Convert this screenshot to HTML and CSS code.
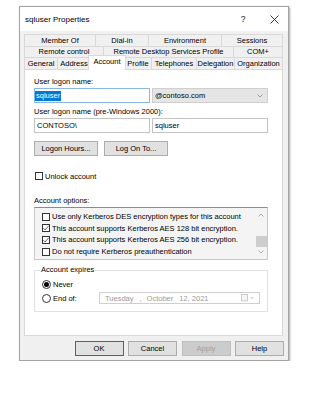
FILE: index.html
```html
<!DOCTYPE html>
<html>
<head>
<meta charset="utf-8">
<link rel="stylesheet" href="styles.css">
</head>
<body>
<div class="window">
  <div class="titlebar">
    <span class="title">sqluser Properties</span>
    <span class="help">?</span>
    <span class="close"><svg width="9" height="9" viewBox="0 0 9 9"><path d="M0.5 0.5L8.5 8.5M8.5 0.5L0.5 8.5" stroke="#222" stroke-width="0.9" fill="none"/></svg></span>
  </div>
  <div class="tabs">
    <div class="tabrow r1">
      <div class="tab">Member Of</div>
      <div class="tab">Dial-in</div>
      <div class="tab">Environment</div>
      <div class="tab last">Sessions</div>
    </div>
    <div class="tabrow r2">
      <div class="tab">Remote control</div>
      <div class="tab">Remote Desktop Services Profile</div>
      <div class="tab last">COM+</div>
    </div>
    <div class="tabrow r3">
      <div class="tab">General</div>
      <div class="tab">Address</div>
      <div class="tab sel">Account</div>
      <div class="tab">Profile</div>
      <div class="tab">Telephones</div>
      <div class="tab">Delegation</div>
      <div class="tab last">Organization</div>
    </div>
  </div>
  <div class="page">
    <div class="label l1">User logon name:</div>
    <div class="fieldrow r-first">
      <div class="input focus"><span class="selected">sqluser</span></div>
      <div class="combo"><span>@contoso.com</span><svg width="6" height="4" viewBox="0 0 6 4"><path d="M0.5 0.5L3 3L5.5 0.5" stroke="#8a8a8a" stroke-width="0.8" fill="none"/></svg></div>
    </div>
    <div class="label l2">User logon name (pre-Windows 2000):</div>
    <div class="fieldrow r-second">
      <div class="input">CONTOSO\</div>
      <div class="input">sqluser</div>
    </div>
    <div class="btnrow">
      <div class="btn wide">Logon Hours...</div>
      <div class="btn wide">Log On To...</div>
    </div>
    <div class="check unlock"><span class="box"></span><span>Unlock account</span></div>
    <div class="label l3">Account options:</div>
    <div class="listbox">
      <div class="items">
        <div class="check item"><span class="box"></span><span>Use only Kerberos DES encryption types for this account</span></div>
        <div class="check item"><span class="box"><svg width="8" height="8" viewBox="0 0 8 8"><path d="M1.3 4.2L3.1 6L6.8 1.6" stroke="#444" stroke-width="0.8" fill="none"/></svg></span><span>This account supports Kerberos AES 128 bit encryption.</span></div>
        <div class="check item"><span class="box"><svg width="8" height="8" viewBox="0 0 8 8"><path d="M1.3 4.2L3.1 6L6.8 1.6" stroke="#444" stroke-width="0.8" fill="none"/></svg></span><span>This account supports Kerberos AES 256 bit encryption.</span></div>
        <div class="check item"><span class="box"></span><span>Do not require Kerberos preauthentication</span></div>
      </div>
      <div class="scrollbar">
        <svg class="arrow" width="6" height="4" viewBox="0 0 6 4"><path d="M0.5 3.5L3 1L5.5 3.5" stroke="#9a9a9a" stroke-width="0.8" fill="none"/></svg>
        <div class="thumb"></div>
        <svg class="arrow" width="6" height="4" viewBox="0 0 6 4"><path d="M0.5 0.5L3 3L5.5 0.5" stroke="#9a9a9a" stroke-width="0.8" fill="none"/></svg>
      </div>
    </div>
    <fieldset class="group">
      <legend>Account expires</legend>
      <div class="radio never"><span class="dot on"></span><span>Never</span></div>
      <div class="radio endof">
        <span class="dot"></span><span>End of:</span>
        <div class="datepicker">
          <span class="d1">Tuesday</span><span class="d2">,</span><span class="d3">October</span><span class="d4">12, 2021</span>
          <svg class="cal" width="14" height="8" viewBox="0 0 14 8"><rect x="0.5" y="0.5" width="6" height="6.5" fill="#f4f4f4" stroke="#c4c4c4" stroke-width="0.8"/><path d="M9.5 3L11 4.6L12.5 3" stroke="#b0b0b0" stroke-width="0.8" fill="none"/></svg>
        </div>
      </div>
    </fieldset>
  </div>
  <div class="buttons">
    <div class="btn def">OK</div>
    <div class="btn">Cancel</div>
    <div class="btn disabled">Apply</div>
    <div class="btn">Help</div>
  </div>
</div>
</body>
</html>
```

FILE: styles.css
```css
* { box-sizing: border-box; }
html, body { margin: 0; padding: 0; background: #ffffff; }
body {
  font-family: "Liberation Sans", Arial, sans-serif;
  font-size: 7.5px;
  color: #000;
}
.window {
  margin: 6px 0 0 19px;
  width: 270px;
  height: 355px;
  border: 1px solid #a3a3a3;
  background: #f0f0f0;
  box-shadow: 1px 1px 2px rgba(0,0,0,0.35);
  padding: 0 5px 0 4px;
  display: flex;
  flex-direction: column;
}
.titlebar {
  height: 24px;
  margin: 0 -5px 0 -4px;
  padding: 0 9px 0 5px;
  background: #ffffff;
  display: flex;
  align-items: center;
}
.title { flex: 1; font-size: 8px; padding-top: 0; }
.help { width: 10px; text-align: center; font-size: 8.5px; color: #222; }
.close { width: 10px; margin-left: 21px; display: flex; justify-content: center; }
.tabs { margin-top: 3px; display: flex; flex-direction: column; }
.tabrow { display: grid; }
.r1 { grid-template-columns: 71px 53px 73px 62px; height: 12px; }
.r2 { grid-template-columns: 79px 130px 50px; height: 11px; }
.r3 { grid-template-columns: 33px 33px 34px 27px 45px 38px 49px; height: 12px; }
.tab {
  border-top: 1px solid #d9d9d9;
  border-left: 1px solid #d9d9d9;
  background: #f0f0f0;
  display: flex;
  align-items: center;
  justify-content: center;
  white-space: nowrap;
  line-height: 1;
}
.tab.last { border-right: 1px solid #d9d9d9; }
.tab.sel {
  background: #ffffff;
  margin: -2px -2px -1px -2px;
  border-right: 1px solid #d9d9d9;
  padding-bottom: 2px;
  position: relative;
  z-index: 1;
}
.page {
  height: 267px;
  border: 1px solid #d9d9d9;
  background: #ffffff;
  padding: 0 14px 0 9px;
}
.label { height: 10px; line-height: 10px; white-space: nowrap; }
.l1 { margin-top: 7px; }
.l2 { margin-top: 4px; }
.l3 { margin-top: 15px; }
.fieldrow { display: flex; gap: 2px; margin-top: 1px; }
.input, .combo {
  width: 116px;
  height: 15px;
  border: 1px solid #c3c3c3;
  background: #fff;
  display: flex;
  align-items: center;
  padding-left: 2px;
  white-space: nowrap;
}
.input.focus { border-color: #8ab6e0; padding-left: 0; }
.selected { background: #0078d7; color: #fff; padding: 1px 1px; line-height: 8px; }
.combo {
  background: #e5e5e5;
  border-color: #cfcfcf;
  justify-content: space-between;
  padding: 0 4px 0 2px;
}
.btnrow { display: flex; gap: 6px; margin-top: 8px; }
.btn {
  width: 49px;
  height: 15px;
  border: 1px solid #adadad;
  background: #e1e1e1;
  display: flex;
  align-items: center;
  justify-content: center;
  white-space: nowrap;
}
.btn.wide { width: 64px; }
.btn.def { border-color: #0078d7; }
.btn.disabled { background: #cccccc; border-color: #bfbfbf; color: #a0a0a0; }
.check { display: flex; align-items: center; gap: 2px; height: 10px; white-space: nowrap; }
.box {
  width: 8px;
  height: 8px;
  border: 1px solid #333;
  background: #fff;
  display: flex;
  align-items: center;
  justify-content: center;
  flex: none;
}
.box svg { margin: -1px; flex: none; }
.unlock { margin-top: 15px; margin-left: 1px; }
.listbox {
  margin-top: 1px;
  height: 53px;
  border: 1px solid #c8c8c8;
  border-top-color: #8c8c8c;
  background: #f4f4f4;
  display: flex;
}
.items { flex: 1; padding: 3px 0 0 7px; }
.item { height: 11.6px; }
.scrollbar {
  width: 12px;
  display: flex;
  flex-direction: column;
  align-items: center;
  padding: 5px 0 3px;
}
.scrollbar .arrow { flex: none; }
.thumb {
  width: 11px;
  height: 11px;
  background: #cdcdcd;
  margin: 19px 0 3px;
}
.group {
  margin: 5px 0 0 0;
  border: 1px solid #e1e1e1;
  padding: 0 7px 7px 5px;
  min-width: 0;
}
.group legend { padding: 0 1px; line-height: 10px; }
.radio { display: flex; align-items: center; gap: 2px; margin-left: 2px; white-space: nowrap; }
.never { margin-top: 4px; height: 10px; }
.endof { margin-top: 3px; height: 12px; }
.dot {
  width: 9px;
  height: 9px;
  border: 1px solid #333;
  border-radius: 50%;
  background: #fff;
  display: flex;
  align-items: center;
  justify-content: center;
  flex: none;
}
.dot.on::after {
  content: "";
  width: 5px;
  height: 5px;
  border-radius: 50%;
  background: #000;
}
.datepicker {
  margin-left: auto;
  width: 161px;
  height: 12px;
  border: 1px solid #cfcfcf;
  background: #fff;
  color: #9a9a9a;
  display: flex;
  align-items: center;
  padding-left: 5px;
}
.d2 { margin-left: 6px; }
.d3 { margin-left: 5px; }
.d4 { margin-left: 6px; }
.cal { margin-left: auto; margin-right: 4px; }
.buttons {
  margin-top: 5px;
  margin-right: -1px;
  display: flex;
  justify-content: flex-end;
  gap: 4.5px;
}
```
